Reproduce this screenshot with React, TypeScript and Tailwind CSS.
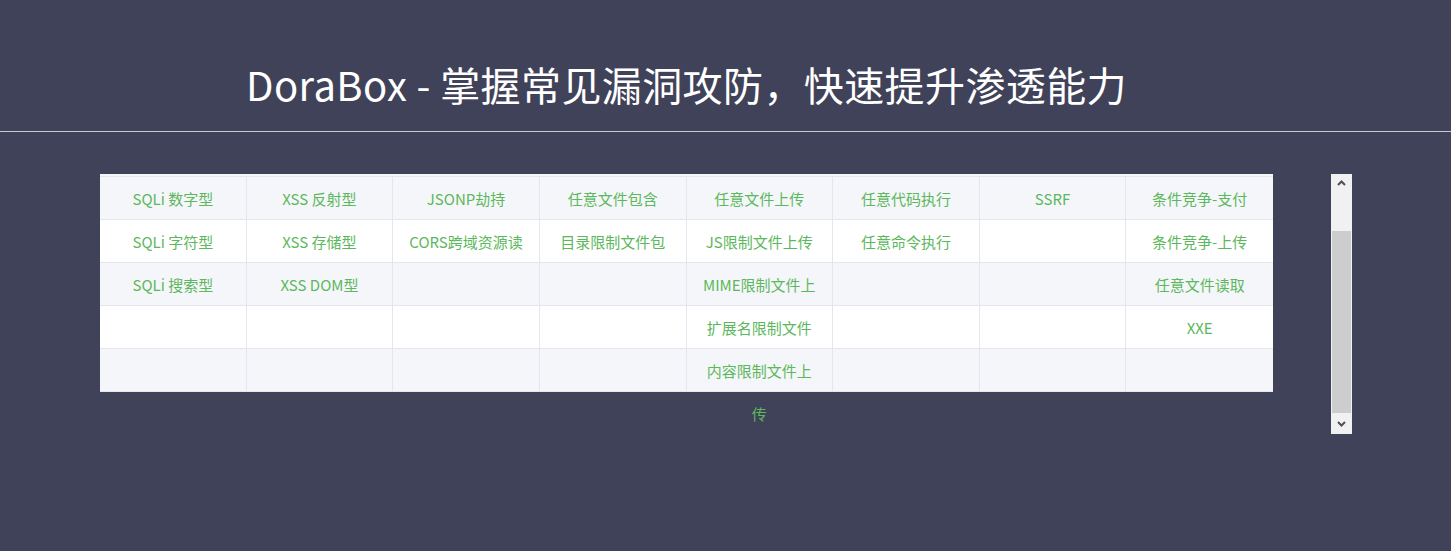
import React from "react";

const rows: string[][] = [
  ["SQLi 数字型", "XSS 反射型", "JSONP劫持", "任意文件包含", "任意文件上传", "任意代码执行", "SSRF", "条件竞争-支付"],
  ["SQLi 字符型", "XSS 存储型", "CORS跨域资源读取", "目录限制文件包含", "JS限制文件上传", "任意命令执行", "", "条件竞争-上传"],
  ["SQLi 搜索型", "XSS DOM型", "", "", "MIME限制文件上传", "", "", "任意文件读取"],
  ["", "", "", "", "扩展名限制文件上传", "", "", "XXE"],
  ["", "", "", "", "内容限制文件上传", "", "", ""],
];

export default function App() {
  return (
    <div
      className="w-[1451px] h-[551px] bg-[#404259] overflow-hidden"
      style={{ fontFamily: '"Noto Sans CJK SC", "Noto Sans", sans-serif' }}
    >
      <div className="h-[131px] border-b border-[#c9cad1] box-content">
        <div className="ml-[100px] w-[1173px] pt-[55px] text-center text-white text-[40px] leading-[58px] tracking-[0.4px]">
          DoraBox - 掌握常见漏洞攻防，快速提升渗透能力
        </div>
      </div>
      <div className="mt-[42px] ml-[100px] flex h-[260px]">
        <div className="w-[1231px]">
          <div className="w-[1173px] bg-[#f5f6fa] pt-[2px] border-b border-[#e4e5ee]">
            {rows.map((r, i) => (
              <div
                key={i}
                className={`relative grid grid-cols-8 h-[43px] border-t border-[#e4e5ee] ${
                  i % 2 === 0 ? "bg-[#f5f6fa]" : "bg-white"
                }`}
              >
                {r.map((c, j) => (
                  <div
                    key={j}
                    className={`relative h-[42px] px-[15px] text-center text-[15px] leading-[43px] text-[#5cb85c] break-all ${
                      j < 7 ? "border-r border-[#e4e5ee]" : ""
                    } ${i % 2 === 0 ? "bg-[#f5f6fa]" : "bg-white"} ${
                      i < rows.length - 1 ? "overflow-hidden" : ""
                    }`}
                  >
                    {c}
                  </div>
                ))}
              </div>
            ))}
          </div>
        </div>
        <div className="w-[21px] h-[260px] bg-[#f1f1f1] flex flex-col items-center">
          <div className="h-[17px] w-full flex items-center justify-center">
            <svg width="9" height="6" viewBox="0 0 9 6">
              <path d="M1 5 L4.5 1.5 L8 5" stroke="#505050" strokeWidth="2" fill="none" />
            </svg>
          </div>
          <div className="mt-[40px] w-[19px] h-[182px] bg-[#cdcdcd]" />
          <div className="flex-1 w-full flex items-center justify-center">
            <svg width="9" height="6" viewBox="0 0 9 6">
              <path d="M1 1 L4.5 4.5 L8 1" stroke="#505050" strokeWidth="2" fill="none" />
            </svg>
          </div>
        </div>
      </div>
    </div>
  );
}
